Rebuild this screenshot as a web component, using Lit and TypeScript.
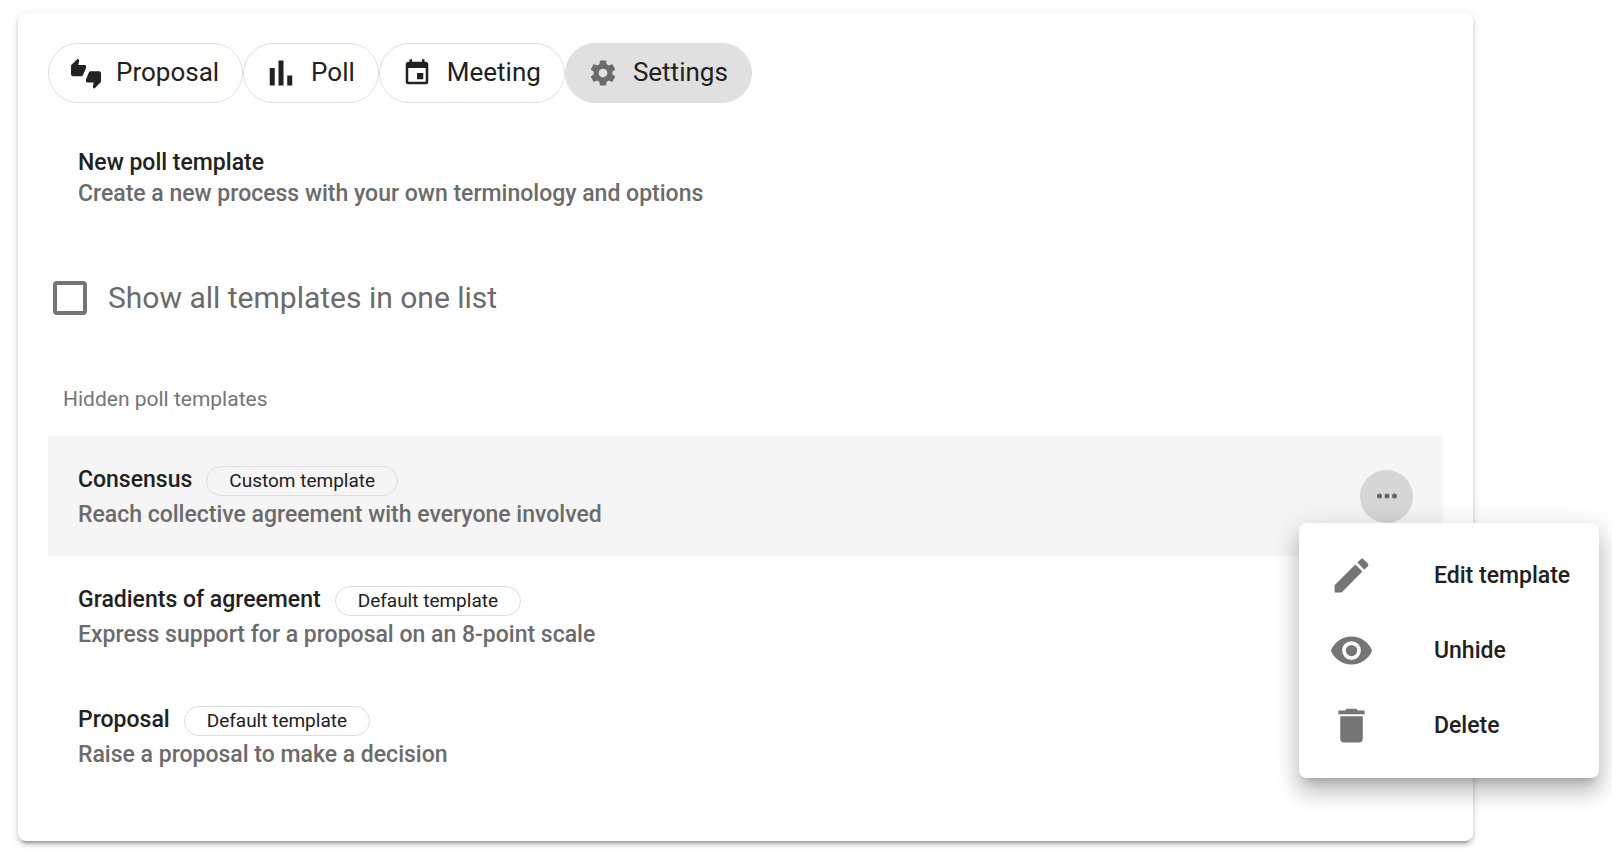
import { LitElement, html, css, svg } from "lit";
import { customElement, property, state } from "lit/decorators.js";
import { classMap } from "lit/directives/class-map.js";

const ICONS = {
  thumbs:
    "M22.5,10.5H15.75C15.13,10.5 14.6,10.88 14.37,11.41L12.11,16.7C12.04,16.87 12,17.06 12,17.25V18.5A1,1 0 0,0 13,19.5H18.18L17.5,22.68V22.92C17.5,23.23 17.63,23.5 17.83,23.72L18.62,24.5L23.56,19.56C23.83,19.29 24,18.91 24,18.5V12A1.5,1.5 0 0,0 22.5,10.5M12,6.5A1,1 0 0,0 11,5.5H5.82L6.5,2.32V2.09C6.5,1.78 6.37,1.5 6.17,1.29L5.38,0.5L0.44,5.44C0.17,5.71 0,6.09 0,6.5V13A1.5,1.5 0 0,0 1.5,14.5H8.25C8.87,14.5 9.4,14.11 9.63,13.59L11.89,8.3C11.96,8.13 12,7.94 12,7.75V6.5Z",
  poll: "M3,22V8H7V22H3M10,22V2H14V22H10M17,22V14H21V22H17Z",
  calendar:
    "M19,19H5V8H19M16,1V3H8V1H6V3H5C3.89,3 3,3.89 3,5V19A2,2 0 0,0 5,21H19A2,2 0 0,0 21,19V5C21,3.89 20.1,3 19,3H18V1M17,12H12V17H17V12Z",
  cog: "M12,15.5A3.5,3.5 0 0,1 8.5,12A3.5,3.5 0 0,1 12,8.5A3.5,3.5 0 0,1 15.5,12A3.5,3.5 0 0,1 12,15.5M19.43,12.97C19.47,12.65 19.5,12.33 19.5,12C19.5,11.67 19.47,11.34 19.43,11L21.54,9.37C21.73,9.22 21.78,8.95 21.66,8.73L19.66,5.27C19.54,5.05 19.27,4.96 19.05,5.05L16.56,6.05C16.04,5.66 15.5,5.32 14.87,5.07L14.5,2.42C14.46,2.18 14.25,2 14,2H10C9.75,2 9.54,2.18 9.5,2.42L9.13,5.07C8.5,5.32 7.96,5.66 7.44,6.05L4.95,5.05C4.73,4.96 4.46,5.05 4.34,5.27L2.34,8.73C2.21,8.95 2.27,9.22 2.46,9.37L4.57,11C4.53,11.34 4.5,11.67 4.5,12C4.5,12.33 4.53,12.65 4.57,12.97L2.46,14.63C2.27,14.78 2.21,15.05 2.34,15.27L4.34,18.73C4.46,18.95 4.73,19.03 4.95,18.95L7.44,17.94C7.96,18.34 8.5,18.68 9.13,18.93L9.5,21.58C9.54,21.82 9.75,22 10,22H14C14.25,22 14.46,21.82 14.5,21.58L14.87,18.93C15.5,18.67 16.04,18.34 16.56,17.94L19.05,18.95C19.27,19.03 19.54,18.95 19.66,18.73L21.66,15.27C21.78,15.05 21.73,14.78 21.54,14.63L19.43,12.97Z",
  dots: "M16,12A2,2 0 0,1 18,10A2,2 0 0,1 20,12A2,2 0 0,1 18,14A2,2 0 0,1 16,12M10,12A2,2 0 0,1 12,10A2,2 0 0,1 14,12A2,2 0 0,1 12,14A2,2 0 0,1 10,12M4,12A2,2 0 0,1 6,10A2,2 0 0,1 8,12A2,2 0 0,1 6,14A2,2 0 0,1 4,12Z",
  pencil:
    "M20.71,7.04C21.1,6.65 21.1,6 20.71,5.63L18.37,3.29C18,2.9 17.35,2.9 16.96,3.29L15.12,5.12L18.87,8.87M3,17.25V21H6.75L17.81,9.93L14.06,6.18L3,17.25Z",
  eye: "M12,9A3,3 0 0,0 9,12A3,3 0 0,0 12,15A3,3 0 0,0 15,12A3,3 0 0,0 12,9M12,17A5,5 0 0,1 7,12A5,5 0 0,1 12,7A5,5 0 0,1 17,12A5,5 0 0,1 12,17M12,4.5C7,4.5 2.73,7.61 1,12C2.73,16.39 7,19.5 12,19.5C17,19.5 21.27,16.39 23,12C21.27,7.61 17,4.5 12,4.5Z",
  trash:
    "M19,4H15.5L14.5,3H9.5L8.5,4H5V6H19M6,19A2,2 0 0,0 8,21H16A2,2 0 0,0 18,19V7H6V19Z",
};
type IconName = keyof typeof ICONS;

@customElement("mdi-icon")
export class MdiIcon extends LitElement {
  @property() name: IconName = "dots";

  static styles = css`
    :host {
      display: block;
      flex: none;
      width: 30px;
      height: 30px;
    }
    .glyph {
      display: block;
      width: 100%;
      height: 100%;
      fill: currentColor;
      overflow: visible;
    }
  `;

  render() {
    return html`<svg class="glyph" viewBox="0 0 24 24" aria-hidden="true">
      ${svg`<path d=${ICONS[this.name]}></path>`}
    </svg>`;
  }
}

const TABS: { label: string; icon: IconName }[] = [
  { label: "Proposal", icon: "thumbs" },
  { label: "Poll", icon: "poll" },
  { label: "Meeting", icon: "calendar" },
  { label: "Settings", icon: "cog" },
];

const TEMPLATES = [
  { title: "Consensus", kind: "Custom template", text: "Reach collective agreement with everyone involved" },
  { title: "Gradients of agreement", kind: "Default template", text: "Express support for a proposal on an 8-point scale" },
  { title: "Proposal", kind: "Default template", text: "Raise a proposal to make a decision" },
];

const ACTIONS: { label: string; icon: IconName }[] = [
  { label: "Edit template", icon: "pencil" },
  { label: "Unhide", icon: "eye" },
  { label: "Delete", icon: "trash" },
];

@customElement("app-root")
export class AppRoot extends LitElement {
  @state() private tab = "Settings";
  @state() private openMenu = 0;

  static styles = css`
    :host {
      display: block;
      padding: 13px 139px 15px 18px;
      font-family: Roboto, "Liberation Sans", sans-serif;
      color: #212121;
    }
    * {
      box-sizing: border-box;
    }
    button {
      font: inherit;
      color: inherit;
      background: none;
      border: 0;
      padding: 0;
      cursor: pointer;
    }
    .card {
      padding: 30px 30px 45px;
      border-radius: 8px;
      background: #fff;
      box-shadow: 0 6px 2px -4px rgba(0, 0, 0, 0.2), 0 4px 4px rgba(0, 0, 0, 0.14),
        0 2px 9px rgba(0, 0, 0, 0.12);
    }
    .chips {
      display: flex;
      flex-wrap: wrap;
    }
    .chips .chip {
      display: flex;
      align-items: center;
      gap: 15px;
      height: 60px;
      padding: 0 23px 0 22px;
      border: 1px solid #e0e0e0;
      border-radius: 30px;
      font-size: 26px;
      line-height: 30px;
    }
    .chips .chip span {
      padding-bottom: 2px;
    }
    .chips .chip.active {
      background: #e0e0e0;
    }
    .chip.active mdi-icon {
      color: #6b6b6b;
    }
    .entry {
      display: block;
      padding: 44px 30px 0;
      color: inherit;
      text-decoration: none;
    }
    .title,
    .text {
      font-size: 23px;
      font-weight: 500;
      line-height: 31px;
      margin: 0;
    }
    .text {
      color: #6b6b6b;
    }
    .toggle {
      display: flex;
      align-items: center;
      gap: 21px;
      margin-top: 69px;
      padding-left: 5px;
      font-size: 30px;
      line-height: 38px;
      color: #6b6b6b;
    }
    .toggle label {
      padding-top: 1px;
    }
    .box {
      appearance: none;
      width: 34px;
      height: 34px;
      margin: 0;
      border: 4px solid #757575;
      border-radius: 4px;
    }
    .box:checked {
      background: #757575;
    }
    .subheader {
      margin: 67px 15px 22px;
      font-size: 21px;
      font-weight: 400;
      line-height: 30px;
      color: #757575;
    }
    .list,
    .menu {
      list-style: none;
      margin: 0;
      padding: 0;
    }
    .row {
      position: relative;
      display: flex;
      align-items: center;
      justify-content: space-between;
      height: 120px;
      padding: 0 30px;
    }
    .row.active {
      background: #f5f5f5;
    }
    .heading {
      display: flex;
      align-items: flex-start;
      gap: 14px;
      padding-top: 2px;
      margin-bottom: 3px;
    }
    .tag {
      height: 30px;
      margin-top: 2px;
      padding: 0 22px;
      border: 1px solid #ddd;
      border-radius: 15px;
      font-size: 19px;
      line-height: 28px;
    }
    .more {
      display: grid;
      place-items: center;
      width: 53px;
      height: 53px;
      border-radius: 50%;
      color: #757575;
    }
    .row.active .more {
      background: #d6d6d6;
      color: #666;
    }
    .menu {
      position: absolute;
      z-index: 1;
      top: 87px;
      left: calc(100% - 144px);
      width: 300px;
      padding: 15px 0;
      border-radius: 8px;
      background: #fff;
      box-shadow: 0 9px 9px -6px rgba(0, 0, 0, 0.2), 0 15px 19px 2px rgba(0, 0, 0, 0.14),
        0 6px 26px 4px rgba(0, 0, 0, 0.12);
    }
    .menu .action {
      display: flex;
      align-items: center;
      gap: 60px;
      width: 100%;
      height: 75px;
      padding: 0 30px;
      font-size: 23px;
      font-weight: 500;
      line-height: 31px;
      white-space: nowrap;
    }
    .action mdi-icon {
      width: 45px;
      height: 45px;
      color: #757575;
    }
  `;

  render() {
    return html`
      <main class="card">
        <nav class="chips">
          ${TABS.map(
            (t) => html`<button
              class=${classMap({ chip: true, active: t.label === this.tab })}
              aria-pressed=${t.label === this.tab}
              @click=${() => (this.tab = t.label)}
            >
              <mdi-icon name=${t.icon}></mdi-icon><span>${t.label}</span>
            </button>`
          )}
        </nav>
        <a class="entry" href="#new">
          <p class="title">New poll template</p>
          <p class="text">Create a new process with your own terminology and options</p>
        </a>
        <div class="toggle">
          <input class="box" type="checkbox" id="all" />
          <label for="all">Show all templates in one list</label>
        </div>
        <h2 class="subheader">Hidden poll templates</h2>
        <ul class="list">
          ${TEMPLATES.map((t, i) => this.row(t, i))}
        </ul>
      </main>
    `;
  }

  private row(t: (typeof TEMPLATES)[number], i: number) {
    const open = this.openMenu === i;
    return html`<li class=${classMap({ row: true, active: open })}>
      <div>
        <div class="heading">
          <span class="title">${t.title}</span><span class="tag">${t.kind}</span>
        </div>
        <p class="text">${t.text}</p>
      </div>
      <button
        class="more"
        aria-label="Template actions"
        aria-expanded=${open}
        @click=${() => (this.openMenu = open ? -1 : i)}
      >
        <mdi-icon name="dots"></mdi-icon>
      </button>
      ${open
        ? html`<ul class="menu">
            ${ACTIONS.map(
              (a) => html`<li>
                <button class="action"><mdi-icon name=${a.icon}></mdi-icon><span>${a.label}</span></button>
              </li>`
            )}
          </ul>`
        : null}
    </li>`;
  }
}
